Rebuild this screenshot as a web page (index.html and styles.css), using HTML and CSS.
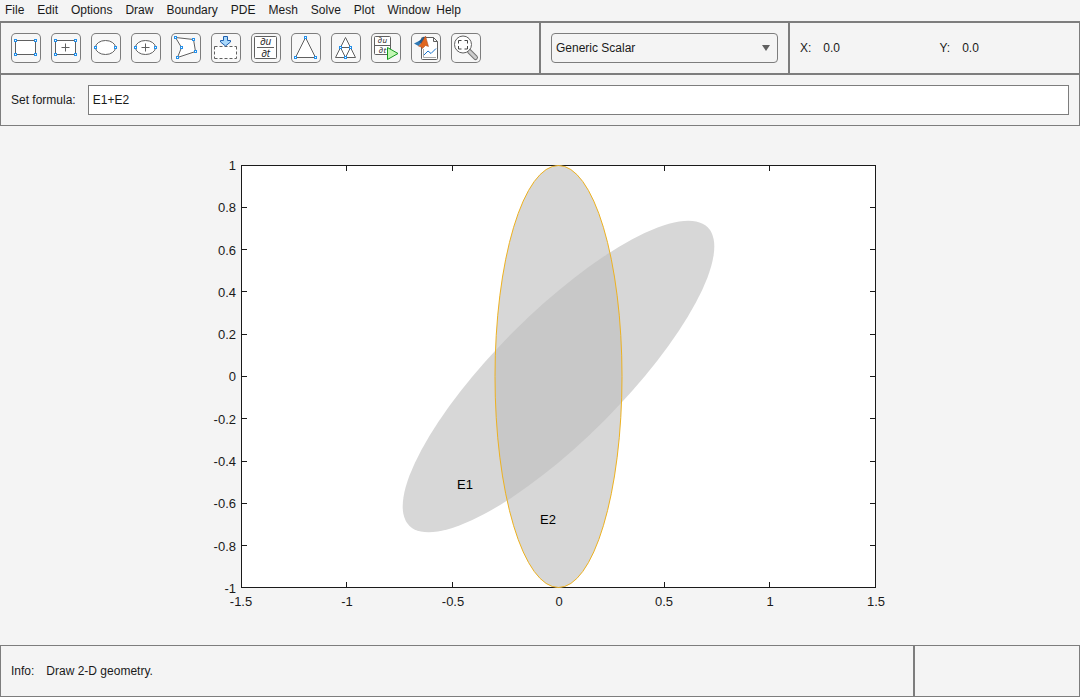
FILE: index.html
```html
<!DOCTYPE html>
<html lang="en">
<head>
<meta charset="utf-8">
<title>PDE Modeler</title>
<link rel="stylesheet" href="styles.css">
</head>
<body>
<nav class="menubar" aria-label="Main menu">
  <button type="button">File</button>
  <button type="button">Edit</button>
  <button type="button">Options</button>
  <button type="button">Draw</button>
  <button type="button">Boundary</button>
  <button type="button">PDE</button>
  <button type="button">Mesh</button>
  <button type="button">Solve</button>
  <button type="button">Plot</button>
  <span class="menu-pair">
    <button type="button">Window</button>
    <button type="button">Help</button>
  </span>
</nav>

<header class="toolbar">
  <div class="tools" role="toolbar" aria-label="Drawing tools">
    <button type="button" class="tool" aria-label="Rectangle">
      <svg class="icon" viewBox="0 0 30 30"><rect class="shape" x="4.500" y="7.500" width="20" height="14"/>
        <g class="handle"><rect x="3.500" y="6.500" width="2" height="2"/><rect x="23.500" y="6.500" width="2" height="2"/><rect x="3.500" y="20.500" width="2" height="2"/><rect x="23.500" y="20.500" width="2" height="2"/></g></svg>
    </button>
    <button type="button" class="tool" aria-label="Centered rectangle">
      <svg class="icon" viewBox="0 0 30 30"><rect class="shape" x="4.500" y="7.500" width="20" height="14"/><path class="shape" d="M14.500 10.500v8M10.500 14.500h8"/>
        <g class="handle"><rect x="3.500" y="6.500" width="2" height="2"/><rect x="23.500" y="6.500" width="2" height="2"/><rect x="3.500" y="20.500" width="2" height="2"/><rect x="23.500" y="20.500" width="2" height="2"/></g></svg>
    </button>
    <button type="button" class="tool" aria-label="Ellipse">
      <svg class="icon" viewBox="0 0 30 30"><ellipse class="shape" cx="14.500" cy="14.500" rx="10" ry="7"/>
        <g class="handle"><rect x="3.500" y="13.500" width="2" height="2"/><rect x="23.500" y="13.500" width="2" height="2"/></g></svg>
    </button>
    <button type="button" class="tool" aria-label="Centered ellipse">
      <svg class="icon" viewBox="0 0 30 30"><ellipse class="shape" cx="14.500" cy="14.500" rx="10" ry="7"/><path class="shape" d="M14.500 10.500v8M10.500 14.500h8"/>
        <g class="handle"><rect x="3.500" y="13.500" width="2" height="2"/><rect x="23.500" y="13.500" width="2" height="2"/></g></svg>
    </button>
    <button type="button" class="tool" aria-label="Polygon">
      <svg class="icon" viewBox="0 0 30 30"><path class="shape" d="M4.500 4.500l18 2 2 12-18 6 4-10z"/>
        <g class="handle"><rect x="3.500" y="3.500" width="2" height="2"/><rect x="21.500" y="5.500" width="2" height="2"/><rect x="23.500" y="17.500" width="2" height="2"/><rect x="5.500" y="23.500" width="2" height="2"/><rect x="9.500" y="13.500" width="2" height="2"/></g></svg>
    </button>
    <button type="button" class="tool" aria-label="Import geometry">
      <svg class="icon" viewBox="0 0 30 30"><rect x="3.500" y="13.500" width="22" height="12" fill="#fff"/><path class="dashed" d="M3.500 13.500h22M3.500 25.500h22M3.500 13.500v12M25.500 13.500v12"/>
        <path d="M12.500 3.500h4v4h3v1.500l-5 4-5-4v-1.500h3z" fill="#a9d8fb" stroke="#1e5fae"/></svg>
    </button>
    <button type="button" class="tool" aria-label="PDE specification">
      <svg class="icon" viewBox="0 0 30 30"><rect class="shape" x="3.500" y="3.500" width="22" height="22" rx="1"/><path class="shape" d="M6 14.500h17"/>
        <text class="math" x="14.500" y="12" font-size="10">∂u</text><text class="math" x="14.500" y="24" font-size="10">∂t</text></svg>
    </button>
    <button type="button" class="tool" aria-label="Initialize mesh">
      <svg class="icon" viewBox="0 0 30 30"><path class="shape" d="M14.500 4.500l10 20h-20z"/>
        <g class="handle"><rect x="13.500" y="3.500" width="2" height="2"/><rect x="3.500" y="23.500" width="2" height="2"/><rect x="23.500" y="23.500" width="2" height="2"/></g></svg>
    </button>
    <button type="button" class="tool" aria-label="Refine mesh">
      <svg class="icon" viewBox="0 0 30 30"><path class="shape" d="M14.500 4.500l10 20h-20zM9.500 14.500h10l-5 10z"/>
        <g class="handle"><rect x="8.500" y="13.500" width="2" height="2"/><rect x="18.500" y="13.500" width="2" height="2"/><rect x="13.500" y="23.500" width="2" height="2"/></g></svg>
    </button>
    <button type="button" class="tool" aria-label="Solve PDE">
      <svg class="icon" viewBox="0 0 30 30"><rect class="shape" x="3.500" y="3.500" width="16" height="18" rx="1"/><path class="shape" d="M3.500 12.500h16"/>
        <text class="math" x="11.500" y="10" font-size="8">∂u</text><text class="math" x="11.500" y="20" font-size="8">∂t</text>
        <path d="M16.500 14.500l10.500 6-10.500 6z" fill="#c3f7b4" stroke="#159a1f"/></svg>
    </button>
    <button type="button" class="tool" aria-label="Plot solution">
      <svg class="icon" viewBox="0 0 30 30"><path class="shape" d="M10.500 5.500a1 1 0 0 1 1-1h11l4 4v17a1 1 0 0 1-1 1H11.500a1 1 0 0 1-1-1zM22.500 4.500v4h4"/>
        <path d="M12.500 16v8.500H25" fill="none" stroke="#aaa"/>
        <path d="M13 22l4-4 3 2.500 5-5" fill="none" stroke="#1874cd"/>
        <path d="M3 10.500l5-2.500 2.500 1.500-3 3.500z" fill="#2e78b4"/><path d="M7.500 8.500L13 3.500l1 1.500-3.500 6z" fill="#1b5a90"/>
        <path d="M14.500 3l3 10.500-3-1-3 3-1.500-1.500-2.500-1c2.500-1 5-7 7-10z" fill="#e0661f" stroke="#a8461a" stroke-width="0.500"/></svg>
    </button>
    <button type="button" class="tool" aria-label="Zoom">
      <svg class="icon" viewBox="0 0 30 30"><path d="M18.500 18.500l6 6" stroke="#737373" stroke-width="5" stroke-linecap="round"/><path d="M18.500 18.500l6 6" stroke="#ccc" stroke-width="3" stroke-linecap="round"/><circle class="shape" cx="12" cy="11.500" r="8.500"/>
        <path d="M7.500 10.500V7.500H10.500M13.500 7.500h3v3M16.500 13v3h-3M10.500 16H7.500v-3" fill="none" stroke="#444"/></svg>
    </button>
  </div>
  <div class="application">
    <select class="app-select" aria-label="Application mode"><option>Generic Scalar</option></select>
  </div>
  <dl class="coords">
    <div class="coord"><dt>X:</dt><dd>0.0</dd></div>
    <div class="coord"><dt>Y:</dt><dd>0.0</dd></div>
  </dl>
</header>

<section class="formula">
  <label for="formula">Set formula:</label>
  <input id="formula" class="formula-input" type="text" value="E1+E2">
</section>

<main class="canvas">
  <svg class="plot" viewBox="0 0 1080 519" role="img" aria-label="Geometry with ellipses E1 and E2">
    <defs>
      <clipPath id="inside-e2"><ellipse cx="558.500" cy="250.500" rx="63.500" ry="211"/></clipPath>
    </defs>
    <rect x="241.500" y="39.500" width="634" height="422" fill="#fff"/>
    <g class="axes">
      <rect x="241.500" y="39.500" width="634" height="422"/>
      <path d="M346.500 39v6M452.500 39v6M558.500 39v6M664.500 39v6M769.500 39v6"/>
      <path d="M346.500 462v-6M452.500 462v-6M558.500 462v-6M664.500 462v-6M769.500 462v-6"/>
      <path d="M241 81.500h6M241 123.500h6M241 165.500h6M241 208.500h6M241 250.500h6M241 292.500h6M241 335.500h6M241 377.500h6M241 419.500h6"/>
      <path d="M876 81.500h-6M876 123.500h-6M876 165.500h-6M876 208.500h-6M876 250.500h-6M876 292.500h-6M876 335.500h-6M876 377.500h-6M876 419.500h-6"/>
    </g>
    <ellipse class="region" cx="558.500" cy="250.500" rx="211" ry="63.500" transform="rotate(-45 558.500 250.500)"/>
    <ellipse class="region" cx="558.500" cy="250.500" rx="63.500" ry="211"/>
    <g clip-path="url(#inside-e2)">
      <ellipse class="overlap" cx="558.500" cy="250.500" rx="211" ry="63.500" transform="rotate(-45 558.500 250.500)"/>
    </g>
    <ellipse class="selected" cx="558.500" cy="250.500" rx="63.500" ry="211"/>
    <g class="names"><text x="457" y="363">E1</text><text x="540" y="398">E2</text></g>
    <g class="ticks-y">
      <text x="236" y="44">1</text><text x="236" y="86">0.8</text><text x="236" y="129">0.6</text><text x="236" y="171">0.4</text>
      <text x="236" y="213">0.2</text><text x="236" y="255">0</text><text x="236" y="298">-0.2</text><text x="236" y="340">-0.4</text>
      <text x="236" y="382">-0.6</text><text x="236" y="425">-0.8</text><text x="236" y="467">-1</text>
    </g>
    <g class="ticks-x">
      <text x="241" y="480">-1.5</text><text x="347" y="480">-1</text><text x="453" y="480">-0.5</text><text x="559" y="480">0</text>
      <text x="664" y="480">0.5</text><text x="770" y="480">1</text><text x="876" y="480">1.5</text>
    </g>
  </svg>
</main>

<footer class="status">
  <div class="info"><span>Info:</span><output>Draw 2-D geometry.</output></div>
  <div class="exit"></div>
</footer>
</body>
</html>
```
FILE: styles.css
```css
* {
  box-sizing: border-box;
}

body {
  margin: 0;
  min-height: 100vh;
  display: flex;
  flex-direction: column;
  background: #f4f4f4;
  color: #1a1a1a;
  font: 12px/16px "Liberation Sans", Helvetica, Arial, sans-serif;
}

button,
input,
select {
  font: inherit;
  color: inherit;
}

.menubar {
  display: flex;
  gap: 13px;
  padding: 2px 5px 3px;
}

.menubar button {
  padding: 0;
  border: 0;
  background: none;
}

.menu-pair {
  display: flex;
  gap: 6px;
}

.toolbar {
  display: grid;
  grid-template-columns: 538fr 249fr 291fr;
  border: 1px solid #7d7d7d;
  border-width: 2px 1px;
}

.tools {
  display: flex;
  gap: 10px;
  padding: 10px;
}

.tool {
  width: 30px;
  height: 30px;
  padding: 0;
  border: 0;
  border-radius: 5px;
  background: #f7f7f7;
  box-shadow: inset 0 0 0 1px #7d7d7d;
}

.icon {
  display: block;
  width: 30px;
  height: 30px;
}

.shape {
  fill: #fff;
  stroke: #606060;
}

.dashed {
  fill: none;
  stroke: #606060;
  stroke-dasharray: 3 2;
}

.handle {
  fill: #fff;
  stroke: #2490ea;
}

.math {
  fill: #222;
  font-family: "Open Sans", sans-serif;
  font-style: italic;
  text-anchor: middle;
}

.application {
  display: flex;
  padding: 10px;
  border-left: 2px solid #7d7d7d;
}

.app-select {
  flex: 1;
  height: 30px;
  padding: 0 24px 0 4px;
  border: 1px solid #7d7d7d;
  border-radius: 4px;
  appearance: none;
  background: url("data:image/svg+xml,%3Csvg xmlns='http://www.w3.org/2000/svg' width='8' height='6'%3E%3Cpath d='M0 0h8L4 6z' fill='%23606060'/%3E%3C/svg%3E") no-repeat right 7px center;
}

.coords {
  display: grid;
  grid-template-columns: 14fr 13fr;
  align-items: center;
  margin: 0;
  padding: 0 10px;
  border-left: 2px solid #7d7d7d;
}

.coord {
  display: flex;
  gap: 12px;
}

.coord dd {
  margin: 0;
}

.formula {
  display: flex;
  align-items: center;
  gap: 12px;
  padding: 10px;
  border: 1px solid #7d7d7d;
  border-top: 0;
}

.formula-input {
  flex: 1;
  height: 30px;
  padding: 0 4px;
  border: 1px solid #7d7d7d;
  background: #fff;
}

.canvas {
  flex: 1;
  display: flex;
}

.plot {
  width: 100%;
  font-size: 13px;
}

.axes {
  fill: none;
  stroke: #1a1a1a;
}

.region {
  fill: #d7d7d7;
}

.overlap {
  fill: #c8c8c8;
}

.selected {
  fill: none;
  stroke: #edb120;
}

.names {
  fill: #000;
}

.ticks-y {
  fill: #1a1a1a;
  text-anchor: end;
}

.ticks-x {
  fill: #1a1a1a;
  text-anchor: middle;
}

.status {
  display: grid;
  grid-template-columns: 1fr 166px;
  border: 1px solid #7d7d7d;
}

.info {
  display: flex;
  align-items: center;
  gap: 12px;
  min-height: 50px;
  padding: 0 10px;
}

.exit {
  border-left: 2px solid #7d7d7d;
}
```
